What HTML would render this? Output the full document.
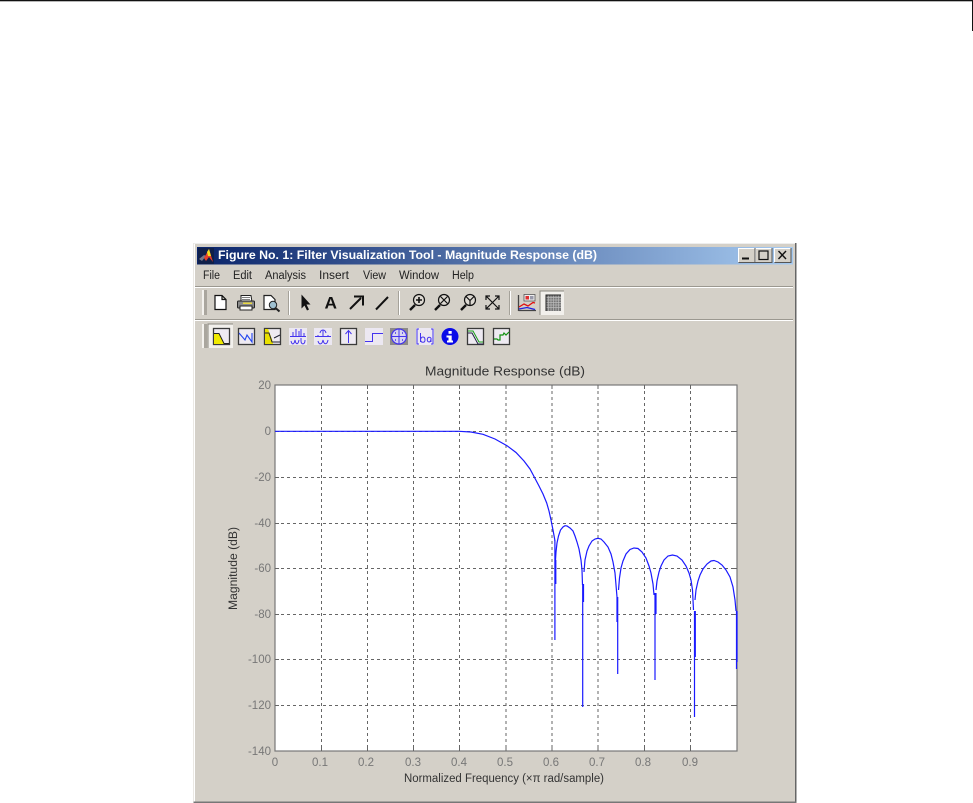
<!DOCTYPE html>
<html><head><meta charset="utf-8"><style>
html,body{margin:0;padding:0;background:#fff;width:973px;height:803px;overflow:hidden}
svg{display:block;position:absolute;left:0;top:0}
text{font-family:"Liberation Sans",sans-serif}
.m{font-size:11.5px;fill:#222}
.t{font-size:11.5px;fill:#777}
.f{fill:#eeeaf2;stroke:#3a3a3a;stroke-width:1.3}
.u{fill:none;stroke:#4433ee;stroke-width:1}
.w{filter:blur(.35px)}
</style></head><body>
<svg width="973" height="803" viewBox="0 0 973 803">
<defs><linearGradient id="tb" x1="0" x2="1" y1="0" y2="0"><stop offset="0" stop-color="#0a246a"/><stop offset="1" stop-color="#a6caf0"/></linearGradient></defs>
<rect x="0" y="0" width="973" height="1.3" fill="#111"/>
<rect x="972" y="0" width="1" height="31" fill="#111"/>

<g class="w">
<!-- window -->
<rect x="193.5" y="243" width="603" height="560" fill="#d4d0c8"/>
<rect x="194" y="243" width="1" height="559" fill="#fff"/>
<rect x="194" y="243" width="601" height="1" fill="#eee"/>
<rect x="795" y="243" width="1.5" height="560" fill="#666"/>
<rect x="193.5" y="801.5" width="603" height="1.5" fill="#777"/>
<rect x="197" y="247" width="596" height="17.5" fill="url(#tb)"/>
<!-- matlab logo -->
<rect x="198" y="248" width="16" height="16" fill="#10204a"/>
<path d="M199,259 L204,255 L206,256 L202,261Z" fill="#778"/>
<path d="M204,258 L209,249 L213,262 L209,257 L206,261Z" fill="#e8402a"/>
<path d="M207,252 L209,249 L211,256 L208,256Z" fill="#f4e020"/>
<text x="218" y="259" font-size="12" font-weight="bold" fill="#fff" textLength="379" lengthAdjust="spacingAndGlyphs">Figure No. 1: Filter Visualization Tool - Magnitude Response (dB)</text>
<!-- window buttons -->
<g fill="#d4d0c8">
<rect x="738" y="248" width="17" height="14.5"/><rect x="755" y="248" width="17" height="14.5"/><rect x="774" y="248" width="17" height="14.5"/></g>
<path d="M738.5,262 V248.5 H754.5 M755.5,262 V248.5 H771.5 M774.5,262 V248.5 H790.5" fill="none" stroke="#fff"/>
<path d="M738.5,262.5 H755 V248 M755.5,262.5 H772 V248 M774.5,262.5 H791 V248" fill="none" stroke="#555"/>
<rect x="742" y="257.5" width="7" height="2" fill="#111"/>
<rect x="759" y="251" width="9" height="8.5" fill="none" stroke="#111" stroke-width="1.2"/>
<path d="M778.5,251 L786,259 M786,251 L778.5,259" stroke="#111" stroke-width="1.4"/>

<!-- menu -->
<text class="m" x="203" y="279" textLength="17" lengthAdjust="spacingAndGlyphs">File</text>
<text class="m" x="233" y="279" textLength="19" lengthAdjust="spacingAndGlyphs">Edit</text>
<text class="m" x="265" y="279" textLength="41" lengthAdjust="spacingAndGlyphs">Analysis</text>
<text class="m" x="319" y="279" textLength="30" lengthAdjust="spacingAndGlyphs">Insert</text>
<text class="m" x="363" y="279" textLength="23" lengthAdjust="spacingAndGlyphs">View</text>
<text class="m" x="399" y="279" textLength="40" lengthAdjust="spacingAndGlyphs">Window</text>
<text class="m" x="452" y="279" textLength="22" lengthAdjust="spacingAndGlyphs">Help</text>

<!-- separators -->
<rect x="195" y="286" width="598" height="1" fill="#9b9890"/><rect x="195" y="287" width="598" height="1" fill="#fff"/>
<rect x="195" y="319" width="598" height="1" fill="#9b9890"/><rect x="195" y="320" width="598" height="1" fill="#fff"/>

<!-- grips -->
<g fill="#f4f2ee"><rect x="202" y="290" width="2" height="25"/><rect x="202" y="324" width="2" height="24"/></g>
<g fill="#aaa69e"><rect x="204" y="290" width="3" height="25"/><rect x="204" y="324" width="3" height="24"/></g>
<g><rect x="288" y="291" width="1" height="24" fill="#a5a29a"/><rect x="289" y="291" width="1" height="24" fill="#fff"/>
<rect x="398" y="291" width="1" height="24" fill="#a5a29a"/><rect x="399" y="291" width="1" height="24" fill="#fff"/>
<rect x="509" y="291" width="1" height="24" fill="#a5a29a"/><rect x="510" y="291" width="1" height="24" fill="#fff"/></g>

<!-- toolbar 1 -->
<path d="M215,295.5 H222 L226,299.5 V309.5 H215Z M222,295.5 V299.5 H226" fill="#fff" stroke="#111" stroke-width="1.2"/>
<g><path d="M241,302 V295.5 H251 L252,302" fill="#fff" stroke="#222"/><path d="M242,297.5 H250 M242,299.5 H250" stroke="#555" stroke-width=".8"/><rect x="237.5" y="301" width="17" height="7" rx="1" fill="#8a8a8a" stroke="#222"/><rect x="240" y="306" width="12" height="4" fill="#fff" stroke="#222"/><rect x="243" y="302.5" width="9" height="1.5" fill="#e8d840"/></g>
<g><path d="M264,295.5 H271 L275,299.5 V309.5 H264Z" fill="#fff" stroke="#222" stroke-width="1.2"/><circle cx="273" cy="305" r="3.7" fill="#9fc0d0" stroke="#222"/><path d="M275.5,308 L279.5,311.5" stroke="#222" stroke-width="2"/></g>
<path d="M301.5,294.5 V308.5 L304.5,305.5 L307,310.5 L309,309.5 L306.5,304.5 H310.5Z" fill="#111"/>
<text x="324.5" y="308.5" font-size="17" font-weight="bold" fill="#111" textLength="12.5" lengthAdjust="spacingAndGlyphs">A</text>
<path d="M350,309 L361,298 M354,296.5 H363 V305.5" fill="none" stroke="#111" stroke-width="2"/>
<path d="M376,309.5 L388,297" stroke="#111" stroke-width="2"/>
<!-- zoom icons -->
<g fill="none" stroke="#111" stroke-width="1.2">
<circle cx="419" cy="300" r="5.5" fill="#ddd9d2"/><path d="M415,305 L410,310" stroke-width="2.4"/><path d="M416,300 H422 M419,297 V303" stroke-width="1.6"/>
<circle cx="444" cy="300" r="5.5" fill="#ddd9d2"/><path d="M440,305 L435,310" stroke-width="2.4"/><path d="M440.5,296.5 L447.5,303.5 M447.5,296.5 L440.5,303.5"/>
<circle cx="470" cy="300" r="5.5" fill="#ddd9d2"/><path d="M466,305 L461,310" stroke-width="2.4"/><path d="M466,296.5 L470,300.5 L474,296.5 M470,300.5 V305.5"/>
<path d="M486,296 L499,309 M499,296 L486,309 M486,300 V296 H490 M495,296 H499 V300 M486,305 V309 H490 M495,309 H499 V305"/>
</g>
<!-- legend -->
<path d="M518.5,311 V295 M518.5,310.5 H536" fill="none" stroke="#444" stroke-width="1.3"/>
<rect x="524" y="294.5" width="11" height="6.5" fill="#eee" stroke="#555" stroke-width=".8"/><rect x="525.5" y="296" width="3.5" height="3.5" fill="#e03030"/><rect x="530" y="296" width="3.5" height="3.5" fill="#99a"/>
<path d="M519,307 L524,304 L528,306 L533,302.5 L535,303" fill="none" stroke="#e01010" stroke-width="1.3"/>
<path d="M519,309 L527,307.5 L535,309.5" fill="none" stroke="#2020e0" stroke-width="1.3"/>
<!-- grid pressed -->
<rect x="540" y="291" width="24" height="24" fill="#f2f0ec"/><path d="M540,315 V291 H564" fill="none" stroke="#8a877f"/>
<rect x="546" y="295" width="15" height="16" fill="#777"/>
<path d="M548.5,295 V311 M551,295 V311 M553.5,295 V311 M556,295 V311 M558.5,295 V311 M546,297.5 H561 M546,300 H561 M546,302.5 H561 M546,305 H561 M546,307.5 H561" stroke="#bbb" stroke-width=".7"/>
<path d="M546,311 V295 H561" fill="none" stroke="#222"/>

<!-- toolbar 2 -->
<rect x="208" y="324" width="25" height="24" fill="#f2f0ec"/><path d="M208,348 V324 H233" fill="none" stroke="#8a877f"/>
<rect class="f" x="213.5" y="328.5" width="16" height="16"/>
<path d="M214,334 H219 L224,343 V344 H214Z" fill="#f0ea00"/><path d="M214,333.5 H219 L224,343.5 H229" fill="none" stroke="#222" stroke-width="1"/>
<rect class="f" x="238.5" y="328.5" width="16" height="16"/>
<path d="M239,333 L245,340 L247,335 L252,342 V333" fill="none" stroke="#2244ee" stroke-width="1.1"/>
<rect class="f" x="264.5" y="328.5" width="16" height="16"/>
<path d="M265,329 H268 L272,339 L273,344 H265Z" fill="#e8e000"/><path d="M265,333 H269 L272,342 H280 M274,338 L280,335" fill="none" stroke="#223" stroke-width="1"/>
<!-- stem-like -->
<rect x="289" y="328" width="18" height="17" fill="#ece8f2"/>
<path d="M290,336.5 H306 M293,332 V336 M296,329 V336 M299,331 V336 M301,329 V336 M304,333 V336 M291,341 C292,345 294,345 295,340 C296,345 298,345 299,340 M301,338 V341 C301,345 305,345 305,340" class="u"/>
<rect x="314" y="328" width="18" height="17" fill="#ece8f2"/>
<path d="M315,336.5 H331 M318,335 V336 M323,330 V336 M328,335 V336 M318,341 C319,345 322,345 323,340 C324,345 327,345 328,340 M320,333 C321,329 325,329 326,333" class="u"/>
<rect class="f" x="340.5" y="328.5" width="16" height="16"/>
<path d="M348.5,343 V331 M345.5,334 L348.5,330.5 L351.5,334" class="u"/>
<rect x="365" y="328" width="18" height="17" fill="#ece8f2"/>
<path d="M365,341.5 H372.5 V333.5 H383" class="u"/>
<rect x="390" y="328" width="18" height="17" fill="#8d8a88"/>
<circle cx="399" cy="336.5" r="7.5" fill="#d8d4f0" stroke="#4433ee" stroke-width="1.2"/><path d="M391.5,336.5 H406.5 M399,329 V344" stroke="#4433ee"/><path d="M395,333 H396 M402,333 H403 M395,340 H396 M402,340 H403" stroke="#4433ee" stroke-width="1.4"/>
<rect x="416" y="328" width="18" height="17" fill="#ece8f2"/>
<path d="M419,329 H417 V344 H419 M431,329 H433 V344 H431 M420.5,333 V342 M420.5,340 C421,336 425,336 425,340 C425,343 421,343 420.5,340 M431,338 C427,335 426,342 429,342 C430.5,342 431,340 431,338 V342" class="u"/>
<circle cx="450" cy="336.5" r="8.5" fill="#0a0ae8"/>
<rect x="448.5" y="331" width="3.2" height="2.8" fill="#fff"/><path d="M446.5,335.5 H451.7 V340.5 H453 V342.5 H447 V340.5 H448.5 V337.5 H446.5Z" fill="#fff"/>
<rect class="f" x="467.5" y="328.5" width="16" height="16"/>
<path d="M468,331 H473 L479,342 H483" fill="none" stroke="#18a018" stroke-width="1"/><path d="M468,333 H472 L478,344 H483" fill="none" stroke="#224" stroke-width="1"/>
<rect class="f" x="493.5" y="328.5" width="16" height="16"/>
<path d="M494,339 H497 L498,340 H500 V335 H503 L504,333 L506,335 L509,332" fill="none" stroke="#109010" stroke-width="1.2"/>

<!-- plot -->
<text x="425" y="375.5" font-size="13" fill="#333" textLength="160" lengthAdjust="spacingAndGlyphs">Magnitude Response (dB)</text>
<rect x="275" y="385" width="462" height="366" fill="#fff"/>
<g stroke="#666" stroke-width="1" stroke-dasharray="3 3" fill="none">
<path d="M275,431.5 H737 M275,477.5 H737 M275,523.5 H737 M275,568.5 H737 M275,614.5 H737 M275,659.5 H737 M275,705.5 H737"/>
<path d="M321.5,385 V751 M367.5,385 V751 M413.5,385 V751 M459.5,385 V751 M506,385 V751 M552,385 V751 M598,385 V751 M644.5,385 V751 M690.5,385 V751"/>
</g>
<rect x="275" y="385" width="462" height="366" fill="none" stroke="#777" stroke-width="1.2"/>
<path d="M321.5,751 V747 M367.5,751 V747 M413.5,751 V747 M459.5,751 V747 M506,751 V747 M552,751 V747 M598,751 V747 M644.5,751 V747 M690.5,751 V747 M321.5,385 V389 M367.5,385 V389 M413.5,385 V389 M459.5,385 V389 M506,385 V389 M552,385 V389 M598,385 V389 M644.5,385 V389 M690.5,385 V389 M275,431.5 H279 M275,477.5 H279 M275,523.5 H279 M275,568.5 H279 M275,614.5 H279 M275,659.5 H279 M275,705.5 H279 M737,431.5 H733 M737,477.5 H733 M737,523.5 H733 M737,568.5 H733 M737,614.5 H733 M737,659.5 H733 M737,705.5 H733" stroke="#666"/>

<!-- curve -->
<g fill="none" stroke="#1a1aff" stroke-width="1.2">
<path d="M275,431.3 H459 L471,432 483,434.3 495,439 507,445.7 516,452.5 524,461 530,469 534,476.5 539,486 543,494 546.7,503 549,511 551,520 553,530 555,541"/>
<path d="M555.5,560 L556,552 557,543 558.5,536 560.5,530 563,527 565,525.7 567,526 570,528 573,531 575,536 577,542 579,549 581,560 582,570 582.5,585"/>
<path d="M584,572 L585,560 587,551 589,546 592,541 595,539 598,538.3 601,539 604,542 608,547 611,554 613,562 615,573 616,585 617,597"/>
<path d="M618.5,590 L619.5,578 621,568 623,561 626,554 630,549.5 634,548 638,548.5 642,552 646,558 649,566 651,573 653,584 654,595"/>
<path d="M656,590 L657,581 659,572 661,566 664,560 668,556 672.5,555 677,556 682,560 686,566 689,573 691,580 692.5,590 693.5,610"/>
<path d="M695,600 L696,590 698,581 700,575 703,569 707,564 711,561 714,560.5 718,562 722,565 726,570 730,577 733,587 735,600 736,611"/>
<path d="M554.9,540 V640 M555.8,560 V584 M582.7,585 V707 M583.5,584 V602 M617.7,597 V674 M617,597 V622 M655,593 V680 M656,593 V614 M694.5,611 V717 M695.3,611 V657 M736.5,611 V669 M737,611 V662"/>
</g>

<!-- y labels -->
<g text-anchor="end">
<text class="t" x="271" y="389">20</text><text class="t" x="271" y="435">0</text><text class="t" x="271" y="481">-20</text><text class="t" x="271" y="527">-40</text><text class="t" x="271" y="572">-60</text><text class="t" x="271" y="618">-80</text><text class="t" x="271" y="663">-100</text><text class="t" x="271" y="709">-120</text><text class="t" x="271" y="755">-140</text>
</g>
<g text-anchor="middle">
<text class="t" x="275" y="766">0</text><text class="t" x="320" y="766">0.1</text><text class="t" x="366" y="766">0.2</text><text class="t" x="413" y="766">0.3</text><text class="t" x="459" y="766">0.4</text><text class="t" x="505" y="766">0.5</text><text class="t" x="551" y="766">0.6</text><text class="t" x="597" y="766">0.7</text><text class="t" x="643" y="766">0.8</text><text class="t" x="690" y="766">0.9</text>
</g>
<text x="404" y="782" font-size="11.5" fill="#333" textLength="200" lengthAdjust="spacingAndGlyphs">Normalized Frequency (×π rad/sample)</text>
<text transform="translate(237,610) rotate(-90)" font-size="11.5" fill="#333" textLength="83" lengthAdjust="spacingAndGlyphs">Magnitude (dB)</text>
</g>
</svg>
</body></html>
